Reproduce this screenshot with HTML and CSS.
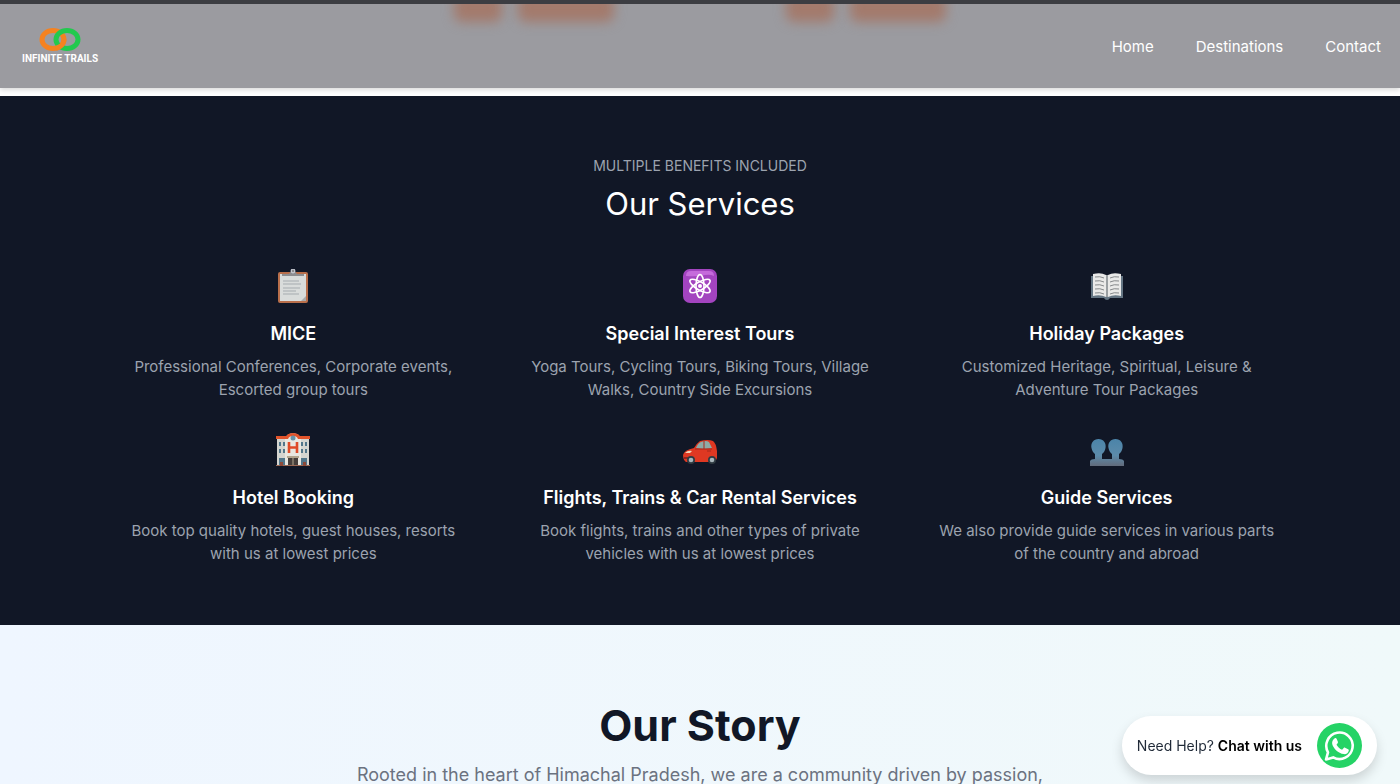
FILE: index.html
```html
<!DOCTYPE html>
<html lang="en">
<head>
    <meta charset="UTF-8">
    <meta name="viewport" content="width=device-width, initial-scale=1.0">
    <title>Infinite Trails</title>
    <link rel="stylesheet" href="styles.css">
</head>
<body>
    <header class="navbar">
        <div class="glows">
            <span class="glow"></span>
            <span class="glow glow-wide"></span>
            <span class="glow glow-second"></span>
            <span class="glow glow-wide"></span>
        </div>
        <a class="logo" href="#">
            <svg width="42" height="25" viewBox="0 0 42 25" fill="none" stroke-width="5">
                <ellipse cx="14" cy="12.5" rx="11" ry="9" stroke="#f58220"/>
                <ellipse cx="28" cy="12.5" rx="11" ry="9" stroke="#22c94e"/>
                <path d="M25 12.5A11 9 0 0 1 17 21.200" stroke="#f58220"/>
            </svg>
            <span class="logo-text">INFINITE TRAILS</span>
        </a>
        <nav class="nav-links">
            <a href="#">Home</a>
            <a href="#">Destinations</a>
            <a href="#">Contact</a>
        </nav>
    </header>

    <main>
        <section class="services">
            <p class="eyebrow">MULTIPLE BENEFITS INCLUDED</p>
            <h2 class="services-title">Our Services</h2>
            <div class="service-grid">
                <article class="service">
                    <!-- clipboard -->
                    <svg class="service-icon" viewBox="0 0 34 34">
                        <rect x="2" y="3" width="30" height="31" rx="2" fill="#b96f4b"/>
                        <path d="M4 5h26v25l-2 2H4z" fill="#d9dcdb"/>
                        <path d="M25 32l5-5v5z" fill="#a9acad"/>
                        <path d="M7 12h16M7 15h18M7 19h17M7 22h13M7 25h16" stroke="#a5abaf" stroke-width="1"/>
                        <path d="M6 5h7c1-1 1.500-2 2-3a2.200 2.200 0 0 1 4 0c.5 1 1 2 2 3h7v2H6z" fill="#8d8d90"/>
                        <circle cx="17" cy="2" r="1.800" fill="none" stroke="#c9ccd4" stroke-width="1.200"/>
                    </svg>
                    <h3>MICE</h3>
                    <p>Professional Conferences, Corporate events, Escorted group tours</p>
                </article>
                <article class="service">
                    <!-- atom -->
                    <svg class="service-icon" viewBox="0 0 34 34">
                        <rect width="34" height="34" rx="7" fill="#a344bf"/>
                        <path d="M3 7q0-5 5-5h18q5 0 5 5-4-2-9-1-8 2-19 1z" fill="#c56bdb"/>
                        <g fill="none" stroke="#fff" stroke-width="1.600">
                            <ellipse cx="17" cy="17" rx="4" ry="11.500"/>
                            <ellipse cx="17" cy="17" rx="4" ry="11.500" transform="rotate(60 17 17)"/>
                            <ellipse cx="17" cy="17" rx="4" ry="11.500" transform="rotate(120 17 17)"/>
                        </g>
                        <circle cx="17" cy="17" r="2" fill="#fff"/>
                    </svg>
                    <h3>Special Interest Tours</h3>
                    <p>Yoga Tours, Cycling Tours, Biking Tours, Village Walks, Country Side Excursions</p>
                </article>
                <article class="service">
                    <!-- open book -->
                    <svg class="service-icon" viewBox="0 0 34 34">
                        <path d="M1 7h32v22H20q-1 2-3 2t-3-2H1z" fill="#647583"/>
                        <path d="M3 5q8-2 13 1v22q-6-3-13-1z" fill="#e9e9e8"/>
                        <path d="M31 5q-8-2-13 1v22q6-3 13-1z" fill="#e9e9e8"/>
                        <path d="M16 6h2v22h-2z" fill="#9a9fa2"/>
                        <path d="M5 8q5-1 9 1M5 12q5-1 9 1M5 16q5-1 9 1M5 20q5-1 9 1M5 24q5-1 9 1M29 8q-5-1-9 1M29 12q-5-1-9 1M29 16q-5-1-9 1M29 20q-5-1-9 1M29 24q-5-1-9 1" fill="none" stroke="#85888a" stroke-width="1"/>
                    </svg>
                    <h3>Holiday Packages</h3>
                    <p>Customized Heritage, Spiritual, Leisure &amp; Adventure Tour Packages</p>
                </article>
                <article class="service">
                    <!-- hotel -->
                    <svg class="service-icon" viewBox="0 0 34 34">
                        <path d="M1 5h9v28H1zM24 5h9v28h-9z" fill="#d5d5d0"/>
                        <path d="M9 6q1-5 8-6 7 1 8 6v27H9z" fill="#e9e7e0"/>
                        <path d="M0 3h10v3H0zM24 3h10v3H24zM9 6q1-6 8-6t8 6h-3q-1-3-5-3t-5 3z" fill="#e2542b"/>
                        <circle cx="17" cy="5" r="2.500" fill="#6793a9"/>
                        <path d="M13 9v11M21 9v11M13 14.500h8" stroke="#df4b28" stroke-width="2.600"/>
                        <path d="M3 9h2v4H3zM7 9h2v4H7zM3 16h2v4H3zM7 16h2v4H7zM25 9h2v4h-2zM29 9h2v4h-2zM25 16h2v4h-2zM29 16h2v4h-2zM3 25h6v7H3zM25 25h6v7h-6z" fill="#52768a"/>
                        <path d="M12 24h10v9H12z" fill="#473f3b"/>
                        <path d="M11 23h12v2H11zM16.500 25h1v8h-1z" fill="#b2a58e"/>
                        <path d="M0 32h34v1H0z" fill="#9b6752"/>
                        <path d="M4 29h3v4H4zM27 29h3v4h-3z" fill="#8d4938"/>
                    </svg>
                    <h3>Hotel Booking</h3>
                    <p>Book top quality hotels, guest houses, resorts with us at lowest prices</p>
                </article>
                <article class="service">
                    <!-- car -->
                    <svg class="service-icon" viewBox="0 0 34 34">
                        <path d="M0 22q1-5 11-7 3-5 6-7 8-2 13 0 3 2 4 10 1 6-1 9l-4 2H3q-3-2-3-7z" fill="#df3822"/>
                        <path d="M13 15q2-5 5-6 5-2 8 0l3 6-8 1z" fill="#8eaaa6"/>
                        <path d="M21 8v8M12 16h17" stroke="#a8281d" stroke-width="1"/>
                        <path d="M2 20q3-3 7-2l-2 2z" fill="#f1d6b8"/>
                        <path d="M1 24h5v2H1z" fill="#8e2520"/>
                        <circle cx="8" cy="27" r="4" fill="#303b42"/>
                        <circle cx="29" cy="27" r="4" fill="#303b42"/>
                        <circle cx="8" cy="27" r="2.300" fill="#a9b6bb"/>
                        <circle cx="29" cy="27" r="2.300" fill="#a9b6bb"/>
                        <path d="M24 18h4" stroke="#a8281d"/>
                    </svg>
                    <h3>Flights, Trains &amp; Car Rental Services</h3>
                    <p>Book flights, trains and other types of private vehicles with us at lowest prices</p>
                </article>
                <article class="service">
                    <!-- two people -->
                    <svg class="service-icon" viewBox="0 0 34 34">
                        <defs>
                            <linearGradient id="people" x1="0" y1="0" x2="0" y2="1">
                                <stop offset="0" stop-color="#4b84a9"/>
                                <stop offset=".6" stop-color="#5c8baa"/>
                                <stop offset="1" stop-color="#626b7b"/>
                            </linearGradient>
                        </defs>
                        <path d="M8.500 6c5 0 8 4 7 9-.5 3-2 5-3.500 6v5h10v-5c-1.500-1-3-3-3.500-6-1-5 2-9 7-9s8 4 7 9c-.5 3-2 5-3.500 6v5q4 0 5 2v5H0v-5q1-2 5-2v-5c-1.500-1-3-3-3.500-6-1-5 2-9 7-9z" fill="url(#people)"/>
                    </svg>
                    <h3>Guide Services</h3>
                    <p>We also provide guide services in various parts of the country and abroad</p>
                </article>
            </div>
        </section>

        <section class="story">
            <h2>Our Story</h2>
            <p>Rooted in the heart of Himachal Pradesh, we are a community driven by passion,</p>
        </section>
    </main>

    <a class="chat" href="#">
        <span>Need Help? <strong>Chat with us</strong></span>
        <svg width="45" height="45" viewBox="0 0 45 45">
            <circle cx="22.500" cy="22.500" r="22.500" fill="#25d366"/>
            <path d="M9 36.500l2-7.200A13.200 13.200 0 1 1 16.200 34.400z" fill="none" stroke="#fff" stroke-width="2.600" stroke-linejoin="round"/>
            <path d="M17.500 15.500c.7-.6 1.800-.5 2.200.4l1.200 2.900c.2.600.1 1-.3 1.500l-1.100 1.400c1.300 2.300 3.200 4 5.600 5.100l1.600-1.800c.4-.5.9-.5 1.400-.3l3 1.500c.6.300.8.700.7 1.300-.4 2.500-2.600 3.900-4.900 3.600-5.800-.9-10.600-5.700-11.700-10.200-.4-2.200.7-4.200 2.300-5.400z" fill="#fff"/>
        </svg>
    </a>
</body>
</html>
```
FILE: styles.css
```css
* {
    box-sizing: border-box;
    margin: 0;
    padding: 0;
}
body {
    display: flex;
    flex-direction: column;
    height: 100vh;
    overflow: hidden;
    border-top: 4px solid #3c3d42;
    background: #fff;
    font-family: Inter, "Liberation Sans", sans-serif;
}
a {
    color: inherit;
    text-decoration: none;
}

/* Navbar */
.navbar {
    position: relative;
    display: flex;
    flex-shrink: 0;
    justify-content: space-between;
    align-items: center;
    height: 84px;
    margin-bottom: 8px;
    padding: 0 19px 0 22px;
    background: #9b9ba0;
    box-shadow: 0 2px 5px rgba(0, 0, 0, 0.15);
    color: #fff;
}
.glows {
    position: absolute;
    inset: 0;
    display: flex;
    justify-content: center;
    gap: 16px;
    overflow: hidden;
}
.glow {
    width: 48px;
    height: 28px;
    margin-top: -10px;
    border-radius: 8px;
    background: #a37a6c;
    filter: blur(6px);
}
.glow-wide {
    width: 96px;
}
.glow-second {
    margin-left: 156px;
}
.logo {
    position: relative;
    display: flex;
    flex-direction: column;
    align-items: center;
}
.logo-text {
    font-family: Roboto, Inter, sans-serif;
    font-size: 10px;
    font-weight: 700;
    line-height: 14px;
}
.nav-links {
    position: relative;
    display: flex;
    gap: 42px;
    font-size: 15px;
}

/* Services */
main {
    display: flex;
    flex: 1;
    flex-direction: column;
    text-align: center;
}
.services {
    padding: 60px 102px;
    background: #111726;
    color: #fff;
}
.eyebrow {
    color: #9ca3af;
    font-size: 14px;
    line-height: 20px;
}
.services-title {
    margin: 8px 0 45px;
    font-size: 31px;
    font-weight: 400;
    line-height: 40px;
}
.service-grid {
    display: grid;
    grid-template-columns: repeat(3, 1fr);
    gap: 32px 24px;
}
.service {
    padding: 0 18px;
}
.service-icon {
    display: block;
    width: 34px;
    height: 34px;
    margin: 0 auto 17px;
}
.service h3 {
    margin-bottom: 7px;
    font-size: 18px;
    font-weight: 600;
    line-height: 28px;
}
.service p {
    color: #9ca3af;
    font-size: 15px;
    line-height: 23px;
}

/* Story */
.story {
    flex: 1;
    padding: 72px 24px 0;
    background: linear-gradient(to right, #eff6ff, #f0f9fa);
}
.story h2 {
    margin-bottom: 8px;
    color: #111726;
    font-size: 43px;
    font-weight: 700;
    line-height: 56px;
}
.story p {
    color: #6b7280;
    font-size: 18px;
    line-height: 28px;
}

/* Chat bubble */
.chat {
    position: fixed;
    right: 23px;
    bottom: 9px;
    display: flex;
    align-items: center;
    gap: 15px;
    padding: 7px 15px;
    border-radius: 30px;
    background: #fff;
    box-shadow: 0 6px 12px rgba(0, 0, 0, 0.15);
    color: #1f2937;
    font-size: 14px;
}
.chat strong {
    color: #000;
    font-weight: 600;
}
```
